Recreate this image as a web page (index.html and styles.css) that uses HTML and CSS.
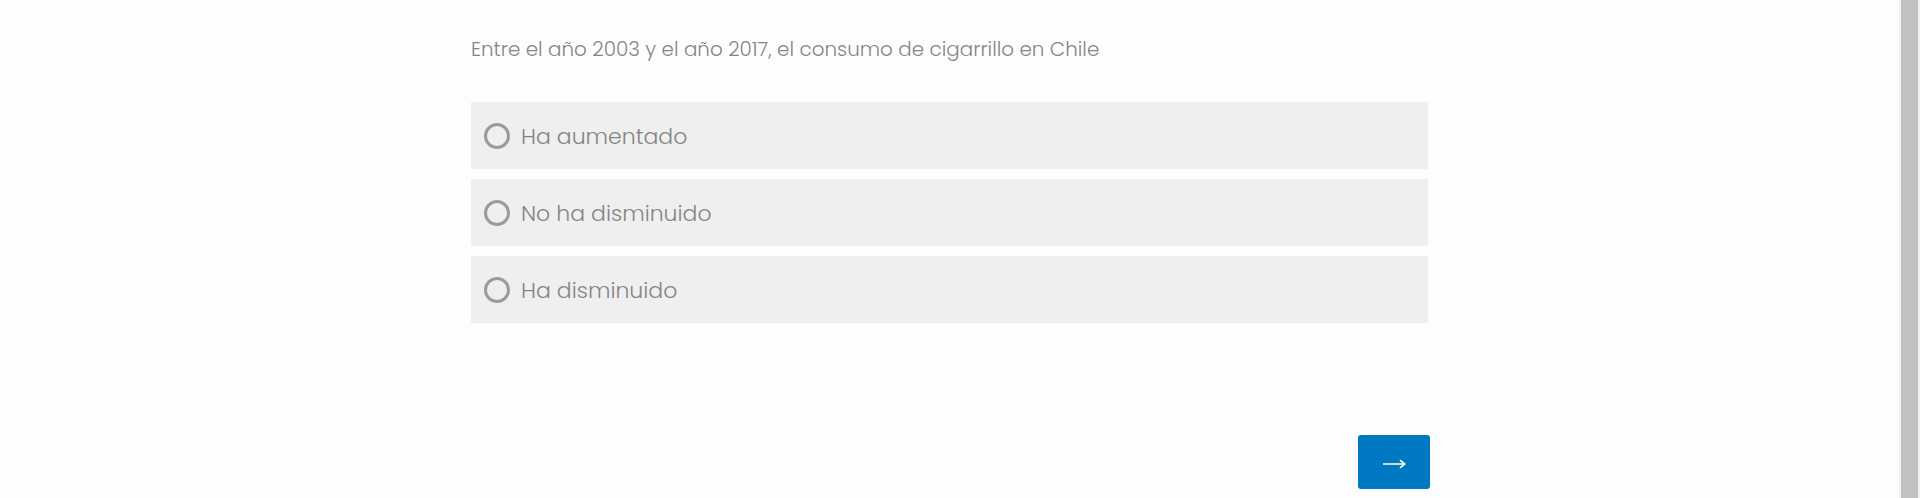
FILE: index.html
```html
<!doctype html>
<html>
<head>
    <title>Pregunta</title>
    <link rel="stylesheet" href="styles.css">
</head>
<body>
    <div class = "page">
        <div class = "page__main">
            <div class = "quiz">
                <p class = "quiz__question">Entre el año 2003 y el año 2017, el consumo de cigarrillo en Chile</p>

                <ul class = "quiz__list">
                    <li class = "quiz__list__item">
                        <span class = "quiz__radio"></span>
                        <span class = "quiz__label">Ha aumentado</span>
                    </li>
                    <li class = "quiz__list__item">
                        <span class = "quiz__radio"></span>
                        <span class = "quiz__label">No ha disminuido</span>
                    </li>
                    <li class = "quiz__list__item">
                        <span class = "quiz__radio"></span>
                        <span class = "quiz__label">Ha disminuido</span>
                    </li>
                </ul>

                <div class = "quiz__nav">
                    <a href = "#" class = "quiz__next" aria-label = "Siguiente">
                        <svg class = "quiz__next__icon" width = "23" height = "10" viewBox = "0 0 23 10">
                            <path d = "M0 5H21.5M17 1.2L21.8 5L17 8.8" fill = "none" stroke = "#fff" stroke-width = "1.6"/>
                        </svg>
                    </a>
                </div>
            </div>
        </div>
        <div class = "page__scroll">
            <div class = "page__scroll__thumb"></div>
        </div>
    </div>
</body>
</html>
```

FILE: styles.css
```css
* {
    box-sizing: border-box;
}

body {
    margin: 0;
    background: #fdfdfd;
    font-family: "Poppins", "Open Sans", sans-serif;
    font-weight: 300;
    color: #858585;
}

.page {
    display: flex;
    height: 498px;
    overflow: hidden;
}

.page__main {
    flex: 1;
    padding-left: 2px;
}

.page__scroll {
    width: 21px;
    background: #f1f1f1;
    padding: 0 2px;
}

.page__scroll__thumb {
    height: 100%;
    background: #c1c1c1;
}

.quiz {
    width: 959px;
    margin: 0 auto;
    padding-top: 35px;
}

.quiz__question {
    margin: 0;
    font-size: 19.9px;
    line-height: 28px;
}

.quiz__list {
    list-style: none;
    margin: 39px 0 0;
    padding: 0;
    width: 957px;
    display: flex;
    flex-direction: column;
    gap: 10px;
}

.quiz__list__item {
    height: 67px;
    background: #efefef;
    display: flex;
    align-items: center;
    padding-left: 13px;
    gap: 11px;
}

.quiz__radio {
    flex: none;
    width: 26px;
    height: 26px;
    border: 3px solid #9b9b9b;
    border-radius: 50%;
}

.quiz__label {
    font-size: 22px;
    line-height: 30px;
    padding-top: 2px;
    color: #858585;
}

.quiz__nav {
    display: flex;
    justify-content: flex-end;
    margin-top: 112px;
}

.quiz__next {
    width: 72px;
    height: 54px;
    background: #0079c2;
    border-radius: 3px;
    display: flex;
    align-items: center;
    justify-content: center;
    padding-top: 4px;
}
```
